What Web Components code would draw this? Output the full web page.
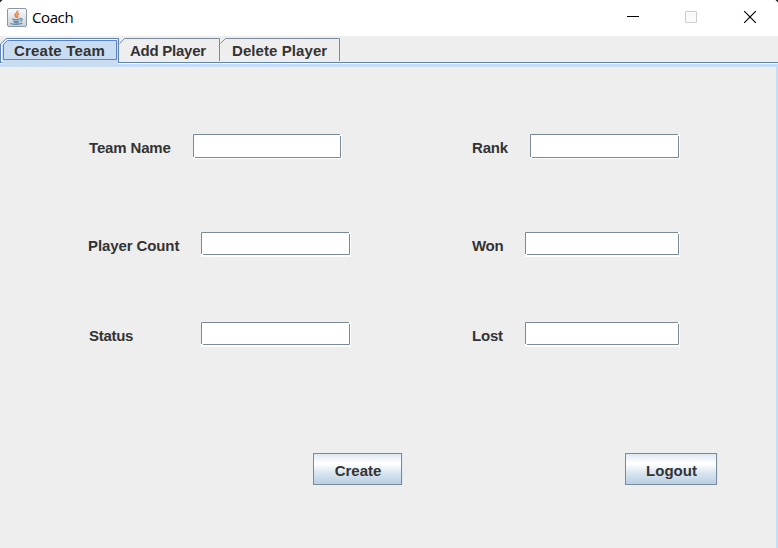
<!DOCTYPE html>
<html lang="en">
<head>
<meta charset="utf-8">
<title>Coach</title>
<style>
html,body{margin:0;width:778px;height:548px;overflow:hidden;background:#eee}
</style>
</head>
<body>
<coach-window></coach-window>
<script>
const define = (name, html) => customElements.define(name, class extends HTMLElement {
  constructor() {
    super();
    const t = document.createElement('template');
    t.innerHTML = html;
    this.attachShadow({mode: 'open'}).append(t.content.cloneNode(true));
  }
});

define('title-bar', `
<style>
:host{display:flex;align-items:center;height:36px;background:linear-gradient(135deg,#333 1.5px,transparent 2.2px),linear-gradient(225deg,#333 1.5px,transparent 2.2px),#fff;box-sizing:border-box;padding-left:7px;font:15px "Open Sans","Noto Sans",sans-serif;color:#000}
svg{display:block;flex:none}
.icon{margin-top:-1px}
.name{flex:1;margin:-2px 0 0 5px;line-height:20px;letter-spacing:-.4px}
.controls{display:flex}
</style>
<svg class="icon" width="20" height="19" viewBox="0 0 20 19">
  <defs><linearGradient id="g" x2="0" y2="1"><stop stop-color="#fafbfc"/><stop offset="1" stop-color="#c8d0d8"/></linearGradient></defs>
  <rect x=".5" y=".5" width="19" height="18" rx="1.5" fill="url(#g)" stroke="#8c98a4"/>
  <path d="M10.600 2.500c1 2-3 2.800-2.500 4.800.2 1 1.300 1.500 1.300 2.700M12.200 5.500c-2 .8-2.500 1.700-1.700 2.700.5.700.2 1.300-.2 1.700" fill="none" stroke="#e98442" stroke-width="1.600"/>
  <path d="M5 10.700c2 .9 6 .9 8 0M6 12.700c2 .9 4.500.9 6.500 0M6.700 14.300c1.500.6 3.500.6 5 0M13 10.700c3-.7 2.500 2.200.3 2.600M3.700 15c0 1.700 9.500 1.700 11.500 0" fill="none" stroke="#5f87a8" stroke-width="1.200"/>
</svg>
<span class="name"><slot></slot></span>
<div class="controls">
<svg width="58" height="36"><path d="M24 16.500h12" stroke="#000"/></svg>
<svg width="58" height="36"><rect x="24.500" y="11.500" width="11" height="11" rx=".5" fill="#fafafa" stroke="#ccc"/></svg>
<svg width="59" height="36"><path d="M25.200 11.200l11.600 11.600M36.800 11.200L25.200 22.800" stroke="#000" stroke-width="1.200"/></svg>
</div>`);

define('tab-strip', `
<style>:host{display:flex;height:31px;background:linear-gradient(#eee 26px,#5c82c0 26px 27px,#fff 27px 28px,#c8ddf2 28px 31px)}</style>
<slot></slot>`);

customElements.define('tab-item', class extends HTMLElement {
  connectedCallback() {
    const w = +this.getAttribute('width'), on = this.hasAttribute('selected');
    const art = on
      ? `<path d="M2 31V9L8 3H118V31Z" fill="#c8ddf2"/><path d="M1.500 26V8.500L6.500 3.500H117.500" fill="none" stroke="#fff"/>
         <path d="M0 26.500H2M.5 26V8L6.500 2.500H118.500V27M3.500 23.500V8.500L7.500 4.500H116.500V23.500Z" fill="none" stroke="#5c82c0"/>`
      : `<path d="M.5 7.500L5.500 2.500H${w - .5}V25" fill="none" stroke="#7a8a99"/>`;
    this.attachShadow({mode: 'open'}).innerHTML = `
<style>
:host{display:grid;width:${w}px;height:31px;font:bold 15px/18px "Liberation Sans",Arial,sans-serif;color:#333;white-space:nowrap}
svg,span{grid-area:1/1}
svg{display:block}
span{padding:6px 0 0 ${this.getAttribute('inset')}px;letter-spacing:${this.getAttribute('track') || 0}px}
</style><svg width="${w}" height="31">${art}</svg><span><slot></slot></span>`;
  }
});

customElements.define('form-field', class extends HTMLElement {
  connectedCallback() {
    const a = n => this.getAttribute(n);
    const w = +a('width'), h = +a('height');
    this.attachShadow({mode: 'open'}).innerHTML = `
<style>
:host{display:flex;align-items:flex-start;height:26px;font:bold 15px/18px "Liberation Sans",Arial,sans-serif;color:#333;white-space:nowrap}
span{box-sizing:border-box;width:${a('label')}px;padding:5px 0 0 ${a('inset') || 0}px;letter-spacing:${a('track') || 0}px}
svg{display:block;flex:none}
</style>
<span><slot></slot></span>
<svg width="${w + 1}" height="26"><rect width="${w + 1}" height="25" fill="#fff"/>
<path d="M.5 ${h - 1}V.5H${w - 1}M2 ${h - .5}H${w - .5}V2" fill="none" stroke="#7a8a99"/></svg>`;
  }
});

define('metal-button', `
<style>
:host{display:grid;place-items:center;box-sizing:border-box;height:32px;border:1px solid #7a8a99;background:linear-gradient(#dde8f3,#fff 30%,#fff 34%,#dae6f0 62%,#b8cfe5);font:bold 15px/18px "Liberation Sans",Arial,sans-serif;color:#333;padding:3px 0 0 1px;box-shadow:1px 0 #dfe7ef}
</style><slot></slot>`);

define('coach-window', `
<style>
:host{display:grid;grid-template-rows:36px 31px 481px;width:778px;height:548px;background:#eee}
main{display:grid;grid-template:26px 98px 90px 1fr / 384px 1fr;padding:67px 0 0 88px;box-sizing:border-box;border-right:2px solid #c8ddf2}
.r2{margin-top:72px}
.r3{margin-top:64px}
.actions{grid-column:1/3;display:flex;margin-top:105px;gap:223px;padding-left:225px}
.create{width:89px}
.logout{width:92px}
</style>
<title-bar>Coach</title-bar>
<tab-strip>
<tab-item selected width="119" inset="14" track=".2">Create Team</tab-item>
<tab-item width="101" inset="11" track="-.25">Add Player</tab-item>
<tab-item width="120" inset="12" track=".08">Delete Player</tab-item>
</tab-strip>
<main>
<form-field label="105" inset="1" width="148" height="24" track="-.15">Team Name</form-field>
<form-field label="58" width="149" height="24" track="-.2">Rank</form-field>
<form-field class="r2" label="113" width="149" height="23" track="-.1">Player Count</form-field>
<form-field class="r2" label="53" width="154" height="23" track="-.3">Won</form-field>
<form-field class="r3" label="113" inset="1" width="149" height="23" track="-.3">Status</form-field>
<form-field class="r3" label="53" width="154" height="23" track="-.2">Lost</form-field>
<div class="actions"><metal-button class="create">Create</metal-button><metal-button class="logout">Logout</metal-button></div>
</main>`);
</script>
</body>
</html>
